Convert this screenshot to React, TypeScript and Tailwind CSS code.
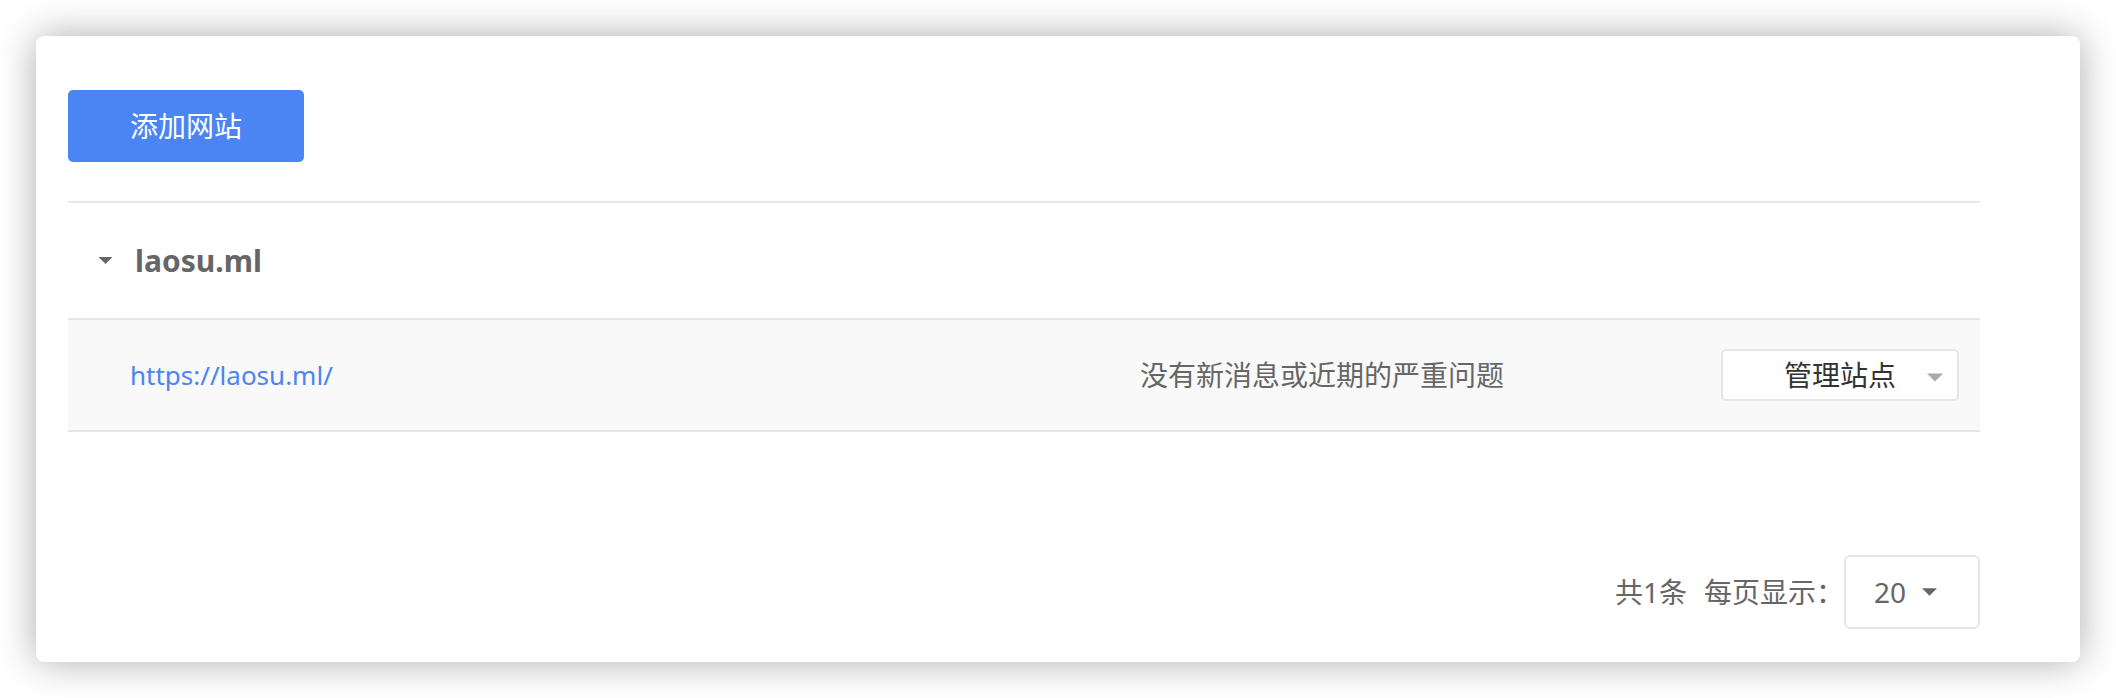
import React from "react";

function Caret({ className }: { className?: string }) {
  return (
    <svg className={className} viewBox="0 0 16 8" fill="currentColor">
      <path d="M0 0 L16 0 L8 8 Z" />
    </svg>
  );
}

export default function App() {
  return (
    <div
      className="min-h-[698px] w-[2116px] bg-white p-[36px]"
      style={{ fontFamily: '"Noto Sans", "Noto Sans CJK SC", sans-serif' }}
    >
      <div className="flex h-[626px] flex-col rounded-[8px] bg-white pl-[32px] pr-[100px] pt-[54px] shadow-[0_0_38px_rgba(0,0,0,0.33)]">
        <div>
          <button className="flex h-[72px] w-[236px] items-center justify-center rounded-[5px] bg-[#4b84f3] text-[28px] leading-none text-white">
            添加网站
          </button>
        </div>

        <div className="mt-[39px] border-t-2 border-[#e6e6e6]">
          <div className="flex h-[115px] items-center pl-[30px]">
            <Caret className="h-[7px] w-[15px] text-[#666666]" />
            <span className="ml-[22px] text-[30px] font-bold leading-none text-[#666666]">
              laosu.ml
            </span>
          </div>
          <div className="flex h-[114px] items-center border-y-2 border-[#e6e6e6] bg-[#f9f9f9] pl-[62px] pr-[21px]">
            <div className="flex-1 text-[26px] leading-none text-[#4b84f3]">
              https://laosu.ml/
            </div>
            <div className="w-[581px] text-[28px] leading-none text-[#666666]">
              没有新消息或近期的严重问题
            </div>
            <div className="relative flex h-[52px] w-[238px] items-center justify-center rounded-[5px] border-2 border-[#e6e6e6] bg-white">
              <span className="text-[28px] leading-none text-[#333333]">管理站点</span>
              <Caret className="absolute right-[14px] top-[22px] h-[9px] w-[16px] text-[#aaaaaa]" />
            </div>
          </div>
        </div>

        <div className="mt-[123px] flex items-center justify-end">
          <span className="mr-[17px] text-[28px] leading-none text-[#666666]">共1条</span>
          <span className="text-[28px] leading-none text-[#666666]">每页显示：</span>
          <div className="flex h-[74px] w-[136px] items-center rounded-[6px] border-2 border-[#e6e6e6] bg-white pl-[28px]">
            <span className="text-[28px] leading-none text-[#666666]">20</span>
            <Caret className="ml-[16px] h-[8px] w-[15px] text-[#666666]" />
          </div>
        </div>
      </div>
    </div>
  );
}
